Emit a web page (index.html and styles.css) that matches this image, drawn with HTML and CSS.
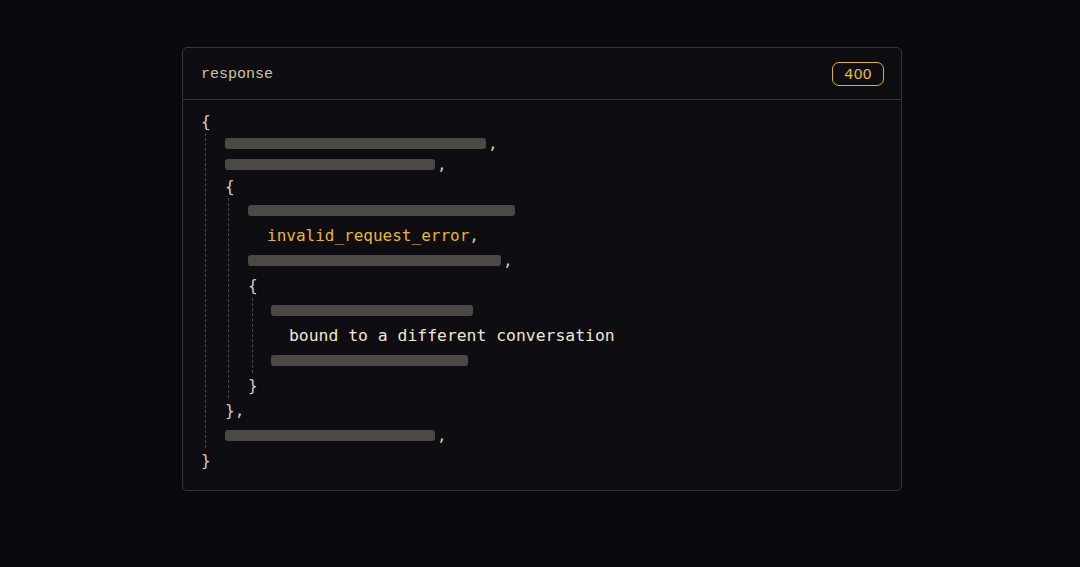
FILE: index.html
```html
<!DOCTYPE html>
<html lang="en">
<head>
<meta charset="utf-8">
<title>response</title>
<link rel="stylesheet" href="styles.css">
</head>
<body>
<div class="card">
  <div class="card-head">
    <span class="title">response</span>
    <span class="badge">400</span>
  </div>
  <div class="code">
    <div class="row t1"><span class="punct">{</span></div>
    <div class="block l1">
      <div class="row t1"><span class="bar" style="width:261px"></span><span class="punct comma">,</span></div>
      <div class="row t3"><span class="bar" style="width:210px"></span><span class="punct comma">,</span></div>
      <div class="row t2"><span class="punct">{</span></div>
      <div class="block l2">
        <div class="row"><span class="bar" style="width:267px"></span></div>
        <div class="row"><span class="value err">invalid_request_error</span><span class="punct">,</span></div>
        <div class="row"><span class="bar" style="width:253px"></span><span class="punct comma">,</span></div>
        <div class="row"><span class="punct">{</span></div>
        <div class="block l3">
          <div class="row"><span class="bar" style="width:202px"></span></div>
          <div class="row"><span class="value msg">bound to a different conversation</span></div>
          <div class="row"><span class="bar" style="width:197px"></span></div>
        </div>
        <div class="row"><span class="punct">}</span></div>
      </div>
      <div class="row"><span class="punct">},</span></div>
      <div class="row"><span class="bar" style="width:210px"></span><span class="punct comma">,</span></div>
    </div>
    <div class="row"><span class="punct">}</span></div>
  </div>
</div>
</body>
</html>
```

FILE: styles.css
```css
html, body {
  margin: 0;
  padding: 0;
  background: #0a0a0e;
}

body {
  width: 1080px;
  height: 567px;
  overflow: hidden;
  font-family: "DejaVu Sans Mono", "Liberation Mono", monospace;
}

.card {
  margin: 47px 0 0 182px;
  width: 718px;
  height: 442px;
  border: 1px solid #35353a;
  border-radius: 5px;
  background: #0d0d12;
}

.card-head {
  height: 51px;
  border-bottom: 1px solid #38383d;
  display: flex;
  align-items: center;
  justify-content: space-between;
  padding: 0 16px 0 18px;
}

.title {
  font-family: "Liberation Mono", "DejaVu Sans Mono", monospace;
  font-size: 15px;
  color: #d2c3a2;
  margin-top: 2px;
}

.badge {
  display: flex;
  align-items: center;
  justify-content: center;
  height: 22px;
  width: 50px;
  margin-right: 1px;
  border: 1px solid #e3b22a;
  border-radius: 7px;
  color: #e6b830;
  font-family: "DejaVu Sans", sans-serif;
  font-size: 14.5px;
}

.code {
  padding: 11px 0 0 18px;
  font-size: 16px;
  color: #dccbaa;
}

.row {
  height: 25px;
  display: flex;
  align-items: center;
  white-space: pre;
}

.row.t1 { height: 21.5px; }
.row.t3 { height: 21px; }
.row.t2 { height: 22.5px; }

.punct { color: #dccbaa; }
.comma { margin-left: 2px; }

.bar {
  display: inline-block;
  height: 11px;
  border-radius: 3px;
  background: #4b4846;
}

.block {
  border-left: 1px dashed #4a4a4e;
}

.block.l1 { margin-left: 4px; padding-left: 19px; }
.block.l2 { margin-left: 3px; padding-left: 19px; }
.block.l3 { margin-left: 4px; padding-left: 18px; }

.value { padding-left: 19px; }
.err { color: #e8b62c; }
.msg { color: #f0e6d0; padding-left: 18px; font-size: 16.4px; }
```
